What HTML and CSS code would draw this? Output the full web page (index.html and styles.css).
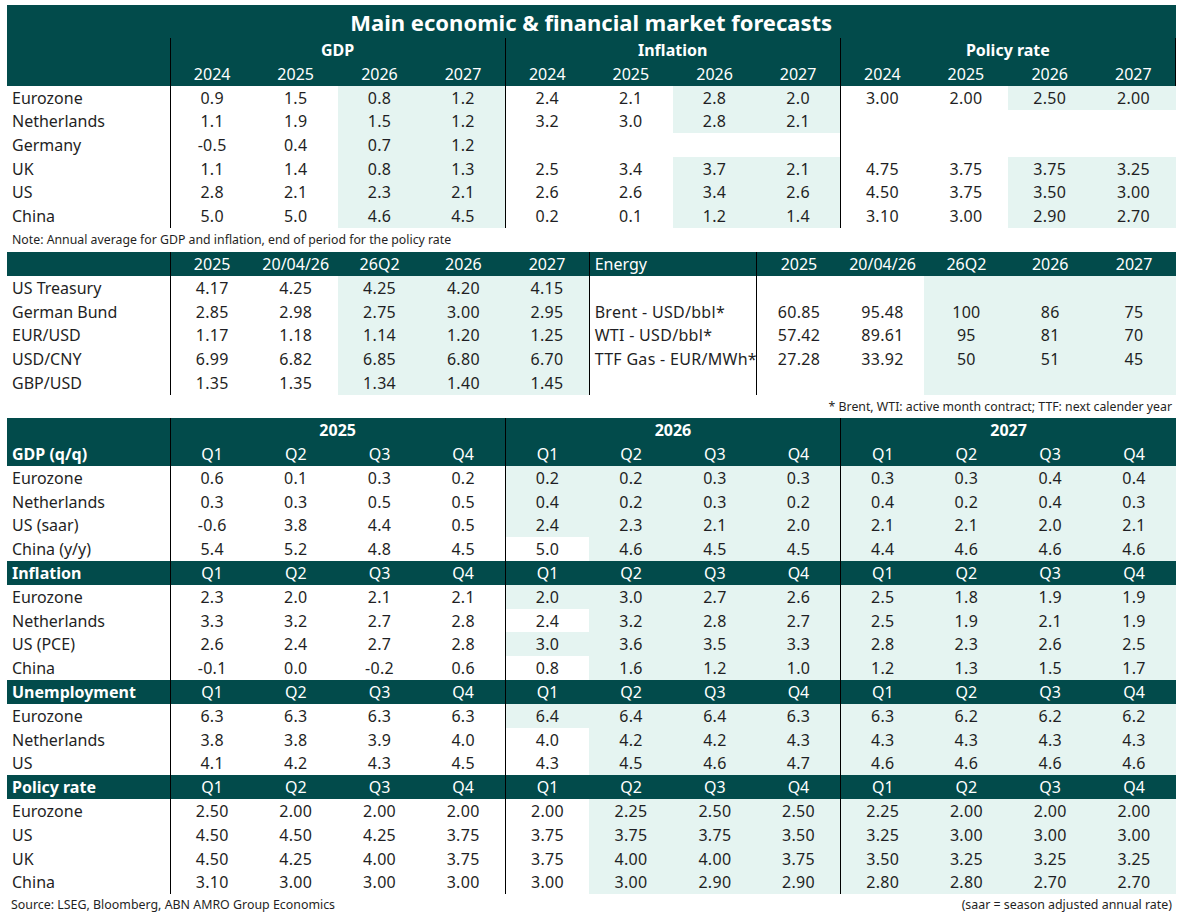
FILE: index.html
```html
<!DOCTYPE html>
<html>
<head>
<meta charset="utf-8">
<title>Main economic &amp; financial market forecasts</title>
<link rel="stylesheet" href="styles.css">
</head>
<body>
<div class="page">

<table class="grid t1">
  <colgroup><col class="lbl"><col span="12"></colgroup>
  <thead>
    <tr class="title"><th colspan="13">Main economic &amp; financial market forecasts</th></tr>
    <tr class="hrow"><th></th><th colspan="4" class="sep b">GDP</th><th colspan="4" class="sep b">Inflation</th><th colspan="4" class="sep b end">Policy rate</th></tr>
    <tr class="hrow"><th></th><th class="sep">2024</th><th>2025</th><th>2026</th><th>2027</th><th class="sep">2024</th><th>2025</th><th>2026</th><th>2027</th><th class="sep">2024</th><th>2025</th><th>2026</th><th class="end">2027</th></tr>
  </thead>
  <tbody>
    <tr class="r1"><td class="l">Eurozone</td><td class="sep">0.9</td><td>1.5</td><td class="f">0.8</td><td class="f">1.2</td><td class="sep">2.4</td><td>2.1</td><td class="f">2.8</td><td class="f">2.0</td><td class="sep">3.00</td><td>2.00</td><td class="f">2.50</td><td class="f">2.00</td></tr>
    <tr class="r1"><td class="l">Netherlands</td><td class="sep">1.1</td><td>1.9</td><td class="f">1.5</td><td class="f">1.2</td><td class="sep">3.2</td><td>3.0</td><td class="f">2.8</td><td class="f">2.1</td><td class="sep"></td><td></td><td></td><td></td></tr>
    <tr class="r1"><td class="l">Germany</td><td class="sep">-0.5</td><td>0.4</td><td class="f">0.7</td><td class="f">1.2</td><td class="sep"></td><td></td><td></td><td></td><td class="sep"></td><td></td><td></td><td></td></tr>
    <tr class="r1"><td class="l">UK</td><td class="sep">1.1</td><td>1.4</td><td class="f">0.8</td><td class="f">1.3</td><td class="sep">2.5</td><td>3.4</td><td class="f">3.7</td><td class="f">2.1</td><td class="sep">4.75</td><td>3.75</td><td class="f">3.75</td><td class="f">3.25</td></tr>
    <tr class="r1"><td class="l">US</td><td class="sep">2.8</td><td>2.1</td><td class="f">2.3</td><td class="f">2.1</td><td class="sep">2.6</td><td>2.6</td><td class="f">3.4</td><td class="f">2.6</td><td class="sep">4.50</td><td>3.75</td><td class="f">3.50</td><td class="f">3.00</td></tr>
    <tr class="r1"><td class="l">China</td><td class="sep">5.0</td><td>5.0</td><td class="f">4.6</td><td class="f">4.5</td><td class="sep">0.2</td><td>0.1</td><td class="f">1.2</td><td class="f">1.4</td><td class="sep">3.10</td><td>3.00</td><td class="f">2.90</td><td class="f">2.70</td></tr>
  </tbody>
</table>
<div class="note">Note: Annual average for GDP and inflation, end of period for the policy rate</div>

<table class="grid t2">
  <colgroup><col class="lbl"><col span="12"></colgroup>
  <thead>
    <tr class="hrow"><th></th><th class="sep">2025</th><th>20/04/26</th><th>26Q2</th><th>2026</th><th>2027</th><th colspan="2" class="sep l">Energy</th><th class="sep">2025</th><th>20/04/26</th><th>26Q2</th><th>2026</th><th>2027</th></tr>
  </thead>
  <tbody>
    <tr class="r2"><td class="l">US Treasury</td><td class="sep">4.17</td><td>4.25</td><td class="f">4.25</td><td class="f">4.20</td><td class="f">4.15</td><td colspan="2" class="sep l"></td><td class="sep"></td><td></td><td class="f"></td><td class="f"></td><td class="f"></td></tr>
    <tr class="r2"><td class="l">German Bund</td><td class="sep">2.85</td><td>2.98</td><td class="f">2.75</td><td class="f">3.00</td><td class="f">2.95</td><td colspan="2" class="sep l">Brent - USD/bbl*</td><td class="sep">60.85</td><td>95.48</td><td class="f">100</td><td class="f">86</td><td class="f">75</td></tr>
    <tr class="r2"><td class="l">EUR/USD</td><td class="sep">1.17</td><td>1.18</td><td class="f">1.14</td><td class="f">1.20</td><td class="f">1.25</td><td colspan="2" class="sep l">WTI - USD/bbl*</td><td class="sep">57.42</td><td>89.61</td><td class="f">95</td><td class="f">81</td><td class="f">70</td></tr>
    <tr class="r2"><td class="l">USD/CNY</td><td class="sep">6.99</td><td>6.82</td><td class="f">6.85</td><td class="f">6.80</td><td class="f">6.70</td><td colspan="2" class="sep l">TTF Gas - EUR/MWh*</td><td class="sep">27.28</td><td>33.92</td><td class="f">50</td><td class="f">51</td><td class="f">45</td></tr>
    <tr class="r2"><td class="l">GBP/USD</td><td class="sep">1.35</td><td>1.35</td><td class="f">1.34</td><td class="f">1.40</td><td class="f">1.45</td><td colspan="2" class="sep l"></td><td class="sep"></td><td></td><td class="f"></td><td class="f"></td><td class="f"></td></tr>
  </tbody>
</table>
<div class="fn">* Brent, WTI: active month contract; TTF: next calender year</div>

<table class="grid t3">
  <colgroup><col class="lbl"><col span="12"></colgroup>
  <tbody>
    <tr class="hrow"><th></th><th colspan="4" class="sep b">2025</th><th colspan="4" class="sep b">2026</th><th colspan="4" class="sep b">2027</th></tr>
    <tr class="hrow"><th class="l b">GDP (q/q)</th><th class="sep">Q1</th><th>Q2</th><th>Q3</th><th>Q4</th><th class="sep">Q1</th><th>Q2</th><th>Q3</th><th>Q4</th><th class="sep">Q1</th><th>Q2</th><th>Q3</th><th>Q4</th></tr>
    <tr class="r3"><td class="l">Eurozone</td><td class="sep">0.6</td><td>0.1</td><td>0.3</td><td>0.2</td><td class="sep f">0.2</td><td class="f">0.2</td><td class="f">0.3</td><td class="f">0.3</td><td class="sep f">0.3</td><td class="f">0.3</td><td class="f">0.4</td><td class="f">0.4</td></tr>
    <tr class="r3"><td class="l">Netherlands</td><td class="sep">0.3</td><td>0.3</td><td>0.5</td><td>0.5</td><td class="sep f">0.4</td><td class="f">0.2</td><td class="f">0.3</td><td class="f">0.2</td><td class="sep f">0.4</td><td class="f">0.2</td><td class="f">0.4</td><td class="f">0.3</td></tr>
    <tr class="r3"><td class="l">US (saar)</td><td class="sep">-0.6</td><td>3.8</td><td>4.4</td><td>0.5</td><td class="sep f">2.4</td><td class="f">2.3</td><td class="f">2.1</td><td class="f">2.0</td><td class="sep f">2.1</td><td class="f">2.1</td><td class="f">2.0</td><td class="f">2.1</td></tr>
    <tr class="r3"><td class="l">China (y/y)</td><td class="sep">5.4</td><td>5.2</td><td>4.8</td><td>4.5</td><td class="sep">5.0</td><td class="f">4.6</td><td class="f">4.5</td><td class="f">4.5</td><td class="sep f">4.4</td><td class="f">4.6</td><td class="f">4.6</td><td class="f">4.6</td></tr>

    <tr class="hrow"><th class="l b">Inflation</th><th class="sep">Q1</th><th>Q2</th><th>Q3</th><th>Q4</th><th class="sep">Q1</th><th>Q2</th><th>Q3</th><th>Q4</th><th class="sep">Q1</th><th>Q2</th><th>Q3</th><th>Q4</th></tr>
    <tr class="r3"><td class="l">Eurozone</td><td class="sep">2.3</td><td>2.0</td><td>2.1</td><td>2.1</td><td class="sep f">2.0</td><td class="f">3.0</td><td class="f">2.7</td><td class="f">2.6</td><td class="sep f">2.5</td><td class="f">1.8</td><td class="f">1.9</td><td class="f">1.9</td></tr>
    <tr class="r3"><td class="l">Netherlands</td><td class="sep">3.3</td><td>3.2</td><td>2.7</td><td>2.8</td><td class="sep">2.4</td><td class="f">3.2</td><td class="f">2.8</td><td class="f">2.7</td><td class="sep f">2.5</td><td class="f">1.9</td><td class="f">2.1</td><td class="f">1.9</td></tr>
    <tr class="r3"><td class="l">US (PCE)</td><td class="sep">2.6</td><td>2.4</td><td>2.7</td><td>2.8</td><td class="sep f">3.0</td><td class="f">3.6</td><td class="f">3.5</td><td class="f">3.3</td><td class="sep f">2.8</td><td class="f">2.3</td><td class="f">2.6</td><td class="f">2.5</td></tr>
    <tr class="r3"><td class="l">China</td><td class="sep">-0.1</td><td>0.0</td><td>-0.2</td><td>0.6</td><td class="sep">0.8</td><td class="f">1.6</td><td class="f">1.2</td><td class="f">1.0</td><td class="sep f">1.2</td><td class="f">1.3</td><td class="f">1.5</td><td class="f">1.7</td></tr>

    <tr class="hrow"><th class="l b">Unemployment</th><th class="sep">Q1</th><th>Q2</th><th>Q3</th><th>Q4</th><th class="sep">Q1</th><th>Q2</th><th>Q3</th><th>Q4</th><th class="sep">Q1</th><th>Q2</th><th>Q3</th><th>Q4</th></tr>
    <tr class="r3"><td class="l">Eurozone</td><td class="sep">6.3</td><td>6.3</td><td>6.3</td><td>6.3</td><td class="sep f">6.4</td><td class="f">6.4</td><td class="f">6.4</td><td class="f">6.3</td><td class="sep f">6.3</td><td class="f">6.2</td><td class="f">6.2</td><td class="f">6.2</td></tr>
    <tr class="r3"><td class="l">Netherlands</td><td class="sep">3.8</td><td>3.8</td><td>3.9</td><td>4.0</td><td class="sep">4.0</td><td class="f">4.2</td><td class="f">4.2</td><td class="f">4.3</td><td class="sep f">4.3</td><td class="f">4.3</td><td class="f">4.3</td><td class="f">4.3</td></tr>
    <tr class="r3"><td class="l">US</td><td class="sep">4.1</td><td>4.2</td><td>4.3</td><td>4.5</td><td class="sep">4.3</td><td class="f">4.5</td><td class="f">4.6</td><td class="f">4.7</td><td class="sep f">4.6</td><td class="f">4.6</td><td class="f">4.6</td><td class="f">4.6</td></tr>

    <tr class="hrow"><th class="l b">Policy rate</th><th class="sep">Q1</th><th>Q2</th><th>Q3</th><th>Q4</th><th class="sep">Q1</th><th>Q2</th><th>Q3</th><th>Q4</th><th class="sep">Q1</th><th>Q2</th><th>Q3</th><th>Q4</th></tr>
    <tr class="r3"><td class="l">Eurozone</td><td class="sep">2.50</td><td>2.00</td><td>2.00</td><td>2.00</td><td class="sep">2.00</td><td class="f">2.25</td><td class="f">2.50</td><td class="f">2.50</td><td class="sep f">2.25</td><td class="f">2.00</td><td class="f">2.00</td><td class="f">2.00</td></tr>
    <tr class="r3"><td class="l">US</td><td class="sep">4.50</td><td>4.50</td><td>4.25</td><td>3.75</td><td class="sep">3.75</td><td class="f">3.75</td><td class="f">3.75</td><td class="f">3.50</td><td class="sep f">3.25</td><td class="f">3.00</td><td class="f">3.00</td><td class="f">3.00</td></tr>
    <tr class="r3"><td class="l">UK</td><td class="sep">4.50</td><td>4.25</td><td>4.00</td><td>3.75</td><td class="sep">3.75</td><td class="f">4.00</td><td class="f">4.00</td><td class="f">3.75</td><td class="sep f">3.50</td><td class="f">3.25</td><td class="f">3.25</td><td class="f">3.25</td></tr>
    <tr class="r3"><td class="l">China</td><td class="sep">3.10</td><td>3.00</td><td>3.00</td><td>3.00</td><td class="sep">3.00</td><td class="f">3.00</td><td class="f">2.90</td><td class="f">2.90</td><td class="sep f">2.80</td><td class="f">2.80</td><td class="f">2.70</td><td class="f">2.70</td></tr>
  </tbody>
</table>
<div class="source"><span>Source: LSEG, Bloomberg, ABN AMRO Group Economics</span><span>(saar = season adjusted annual rate)</span></div>

</div>
</body>
</html>
```

FILE: styles.css
```css
html, body {
  margin: 0;
  padding: 0;
  background: #ffffff;
}

body {
  font-family: "Noto Sans", "Liberation Sans", sans-serif;
  color: #1f1f24;
}

.page {
  width: 1169px;
  padding: 5px 0 0 7px;
}

.grid {
  width: 1169px;
  border-collapse: collapse;
  table-layout: fixed;
}

.grid col.lbl {
  width: 163px;
}

.grid th,
.grid td {
  padding: 0;
  text-align: center;
  vertical-align: middle;
  font-size: 16px;
  line-height: 20px;
  white-space: nowrap;
  overflow: hidden;
}

.grid td.sep,
.grid td + td {
  letter-spacing: 0.3px;
}

.grid th {
  font-weight: 400;
}

.hrow,
.title {
  background: #024b4b;
  color: #ffffff;
}

.title th {
  height: 33px;
  font-size: 22px;
  font-weight: 700;
  line-height: 26px;
  padding-top: 0;
}

.hrow th {
  height: 24px;
}

.r1 td {
  height: 23.67px;
}

.r2 td {
  height: 23.8px;
}

.r3 td {
  height: 23.75px;
}

.grid .b {
  font-weight: 700;
}

.grid .l {
  text-align: left;
  padding-left: 5px;
  letter-spacing: 0;
}

.grid .sep {
  border-left: 1.5px solid #000000;
}

.grid .end {
  border-right: 1.5px solid #000000;
}

.grid .f {
  background: #e5f4f1;
}

.note {
  height: 24px;
  line-height: 24px;
  font-size: 12.3px;
  padding-left: 5px;
}

.fn {
  height: 23px;
  line-height: 23px;
  font-size: 12.3px;
  text-align: right;
  padding-right: 4px;
}

.source {
  display: flex;
  justify-content: space-between;
  height: 22px;
  line-height: 22px;
  font-size: 12.4px;
  padding: 0 4px 0 4px;
}
```
